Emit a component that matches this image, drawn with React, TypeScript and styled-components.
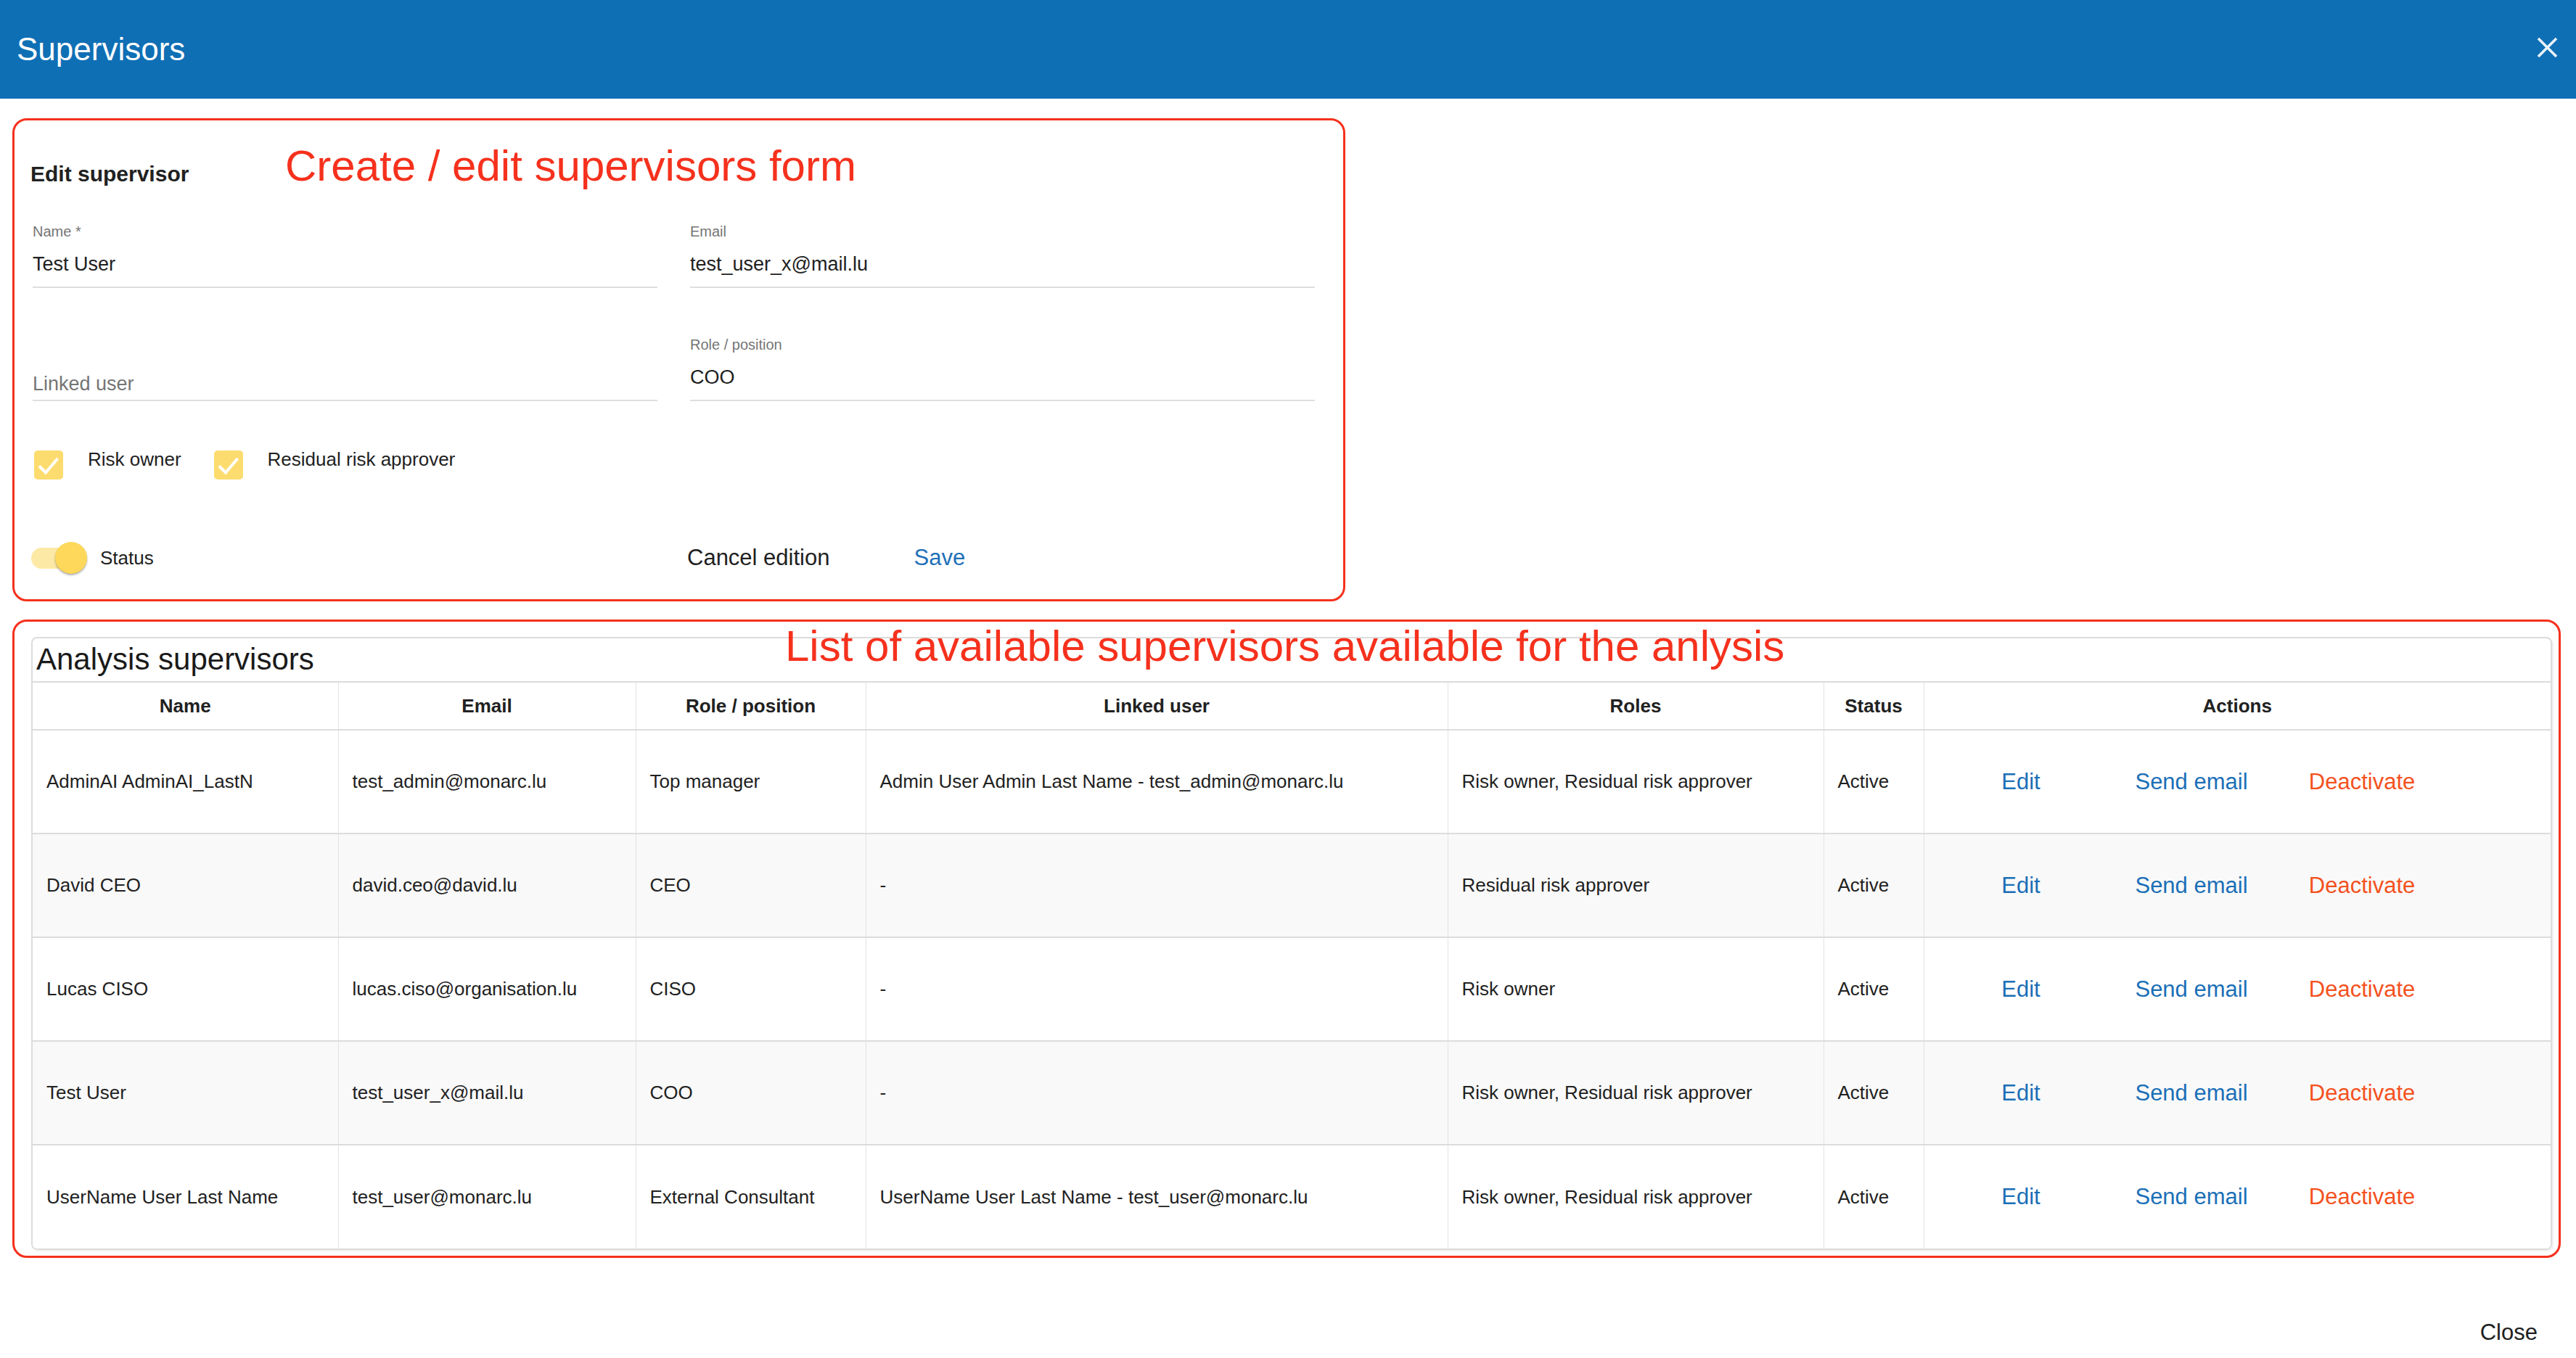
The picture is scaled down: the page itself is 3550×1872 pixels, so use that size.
import React from 'react';
import styled, { createGlobalStyle } from 'styled-components';

const GlobalStyle = createGlobalStyle`
  html, body {
    margin: 0;
    padding: 0;
    background: #ffffff;
  }

  body {
    font-family: 'Liberation Sans', Arial, Helvetica, sans-serif;
    color: #212121;
  }

  * {
    box-sizing: border-box;
  }
`;

const Page = styled.div`
  width: 3550px;
  min-height: 1872px;
  display: flex;
  flex-direction: column;
`;

const TopBar = styled.header`
  height: 136px;
  padding: 0 25px 0 23px;
  display: flex;
  align-items: center;
  justify-content: space-between;
  background: #0f6fb5;

  h1 {
    margin: 0;
    font-size: 44px;
    line-height: 52px;
    font-weight: 400;
    color: #ffffff;
  }
`;

const CloseIcon = styled.button`
  width: 29px;
  height: 29px;
  margin-bottom: 6px;
  padding: 0;
  border: none;
  background: none;
  display: flex;

  svg {
    width: 29px;
    height: 29px;
  }
`;

const Content = styled.main`
  padding: 27px 21px 0 17px;
  display: flex;
  flex-direction: column;
  gap: 25px;
`;

// red frames drawn over the screenshot
const Frame = styled.section<{ $width: number }>`
  position: relative;
  width: ${(props) => props.$width}px;
  border: 3px solid #f5311d;
  border-radius: 20px;
`;

const Annotation = styled.div<{ $left: number; $top: number }>`
  position: absolute;
  left: ${(props) => props.$left}px;
  top: ${(props) => props.$top}px;
  font-size: 60px;
  line-height: 60px;
  color: #f5311d;
  white-space: nowrap;
`;

const FormBody = styled.div`
  padding: 56px 24px 35px 24px;
  display: flex;
  flex-direction: column;
`;

const FormTitle = styled.h2`
  margin: 0 0 49px -2px;
  font-size: 30px;
  line-height: 36px;
  font-weight: 700;
  color: #212121;
`;

const FieldGrid = styled.div`
  display: grid;
  grid-template-columns: 861px 861px;
  column-gap: 45px;
  row-gap: 66px;
  margin-left: 1px;
`;

const Field = styled.div`
  height: 90px;
  display: flex;
  flex-direction: column;
  justify-content: flex-end;
  padding-bottom: 15px;
  border-bottom: 2px solid #dedede;
`;

const FieldLabel = styled.label`
  font-size: 20px;
  line-height: 24px;
  color: #757575;
  margin-bottom: 17px;
`;

const FieldValue = styled.div<{ $placeholder?: boolean }>`
  font-size: 27px;
  line-height: 32px;
  color: ${(props) => (props.$placeholder ? '#757575' : '#212121')};
  margin-bottom: ${(props) => (props.$placeholder ? '-9px' : '0')};
`;

const CheckRow = styled.div`
  margin-top: 68px;
  display: flex;
  align-items: flex-start;
`;

const CheckItem = styled.div`
  display: flex;
  align-items: flex-start;
  gap: 34px;
  margin-right: 42px;
  margin-left: 3px;

  span {
    margin-top: -3px;
    font-size: 26px;
    line-height: 30px;
    color: #212121;
  }
`;

const CheckBox = styled.div`
  width: 40px;
  height: 40px;
  border-radius: 5px;
  background: #fddc6f;
  display: flex;
  align-items: center;
  justify-content: center;
`;

const ActionRow = styled.div`
  margin-top: 86px;
  height: 44px;
  display: grid;
  grid-template-columns: 906px auto;
  align-items: center;
`;

const StatusToggle = styled.div`
  display: flex;
  align-items: center;
  gap: 18px;

  span {
    font-size: 26px;
    line-height: 30px;
  }
`;

const Switch = styled.div`
  position: relative;
  width: 77px;
  height: 44px;
  margin-left: -1px;
  display: flex;
  align-items: center;
`;

const SwitchTrack = styled.div`
  width: 74px;
  height: 29px;
  border-radius: 15px;
  background: #fde9a6;
`;

const SwitchThumb = styled.div`
  position: absolute;
  right: 0;
  top: 0;
  width: 44px;
  height: 44px;
  border-radius: 50%;
  background: #fdd85a;
  box-shadow: 0 2px 3px rgba(0, 0, 0, 0.25), 0 1px 1px rgba(0, 0, 0, 0.14);
`;

const FormButtons = styled.div`
  display: flex;
  align-items: center;
  gap: 116px;
  margin-left: -3px;
`;

const TextButton = styled.button<{ $color?: string; $size?: number }>`
  padding: 0;
  border: none;
  background: none;
  font-family: inherit;
  font-size: ${(props) => props.$size ?? 31}px;
  line-height: 40px;
  color: ${(props) => props.$color ?? '#212121'};
  cursor: pointer;
  white-space: nowrap;
`;

const ListBody = styled.div`
  padding: 21px 9px 8px 23px;
`;

const Card = styled.div`
  border: 2px solid #dcdcdc;
  border-radius: 8px;
  box-shadow: 2px 2px 1px rgba(0, 0, 0, 0.06);
  overflow: hidden;
`;

const CardTitle = styled.h3`
  margin: 0;
  padding: 5px 5px 6px 5px;
  font-size: 42px;
  line-height: 48px;
  font-weight: 400;
  color: #1a1a1a;
`;

const Table = styled.table`
  width: 100%;
  table-layout: fixed;
  border-collapse: collapse;
  font-size: 26px;
  color: #212121;
`;

const HeadCell = styled.th`
  height: 66px;
  padding: 0;
  font-weight: 700;
  text-align: center;
  border-top: 2px solid #dcdcdc;
  border-bottom: 2px solid #dcdcdc;
  border-left: 1px solid #e3e3e3;

  &:first-child {
    border-left: none;
  }
`;

const Row = styled.tr<{ $alt: boolean }>`
  background: ${(props) => (props.$alt ? '#f9f9f9' : '#ffffff')};
  border-bottom: 2px solid #dcdcdc;

  &:last-child {
    border-bottom: none;
  }
`;

const Cell = styled.td`
  height: 143px;
  padding: 0 10px 0 19px;
  border-left: 1px solid #e3e3e3;
  white-space: nowrap;

  &:first-child {
    border-left: none;
  }
`;

const ActionCell = styled(Cell)`
  padding-left: 34px;
`;

const ActionList = styled.div`
  display: flex;
  gap: 36px;
`;

const ActionButton = styled.button<{ $danger?: boolean }>`
  min-width: 199px;
  padding: 0 14px;
  border: none;
  background: none;
  font-family: inherit;
  font-size: 31px;
  line-height: 40px;
  text-align: center;
  color: ${(props) => (props.$danger ? '#f4511e' : '#1b6fb7')};
  cursor: pointer;
`;

const Footer = styled.footer`
  margin-top: 83px;
  padding-right: 53px;
  display: flex;
  justify-content: flex-end;
`;

interface ISupervisor {
  name: string;
  email: string;
  role: string;
  linked: string;
  roles: string;
  status: string;
}

const supervisors: ISupervisor[] = [
  {
    name: 'AdminAI AdminAI_LastN',
    email: 'test_admin@monarc.lu',
    role: 'Top manager',
    linked: 'Admin User Admin Last Name - test_admin@monarc.lu',
    roles: 'Risk owner, Residual risk approver',
    status: 'Active',
  },
  {
    name: 'David CEO',
    email: 'david.ceo@david.lu',
    role: 'CEO',
    linked: '-',
    roles: 'Residual risk approver',
    status: 'Active',
  },
  {
    name: 'Lucas CISO',
    email: 'lucas.ciso@organisation.lu',
    role: 'CISO',
    linked: '-',
    roles: 'Risk owner',
    status: 'Active',
  },
  {
    name: 'Test User',
    email: 'test_user_x@mail.lu',
    role: 'COO',
    linked: '-',
    roles: 'Risk owner, Residual risk approver',
    status: 'Active',
  },
  {
    name: 'UserName User Last Name',
    email: 'test_user@monarc.lu',
    role: 'External Consultant',
    linked: 'UserName User Last Name - test_user@monarc.lu',
    roles: 'Risk owner, Residual risk approver',
    status: 'Active',
  },
];

const columns = [
  { title: 'Name', width: 421 },
  { title: 'Email', width: 410 },
  { title: 'Role / position', width: 317 },
  { title: 'Linked user', width: 802 },
  { title: 'Roles', width: 518 },
  { title: 'Status', width: 138 },
  { title: 'Actions', width: 864 },
];

const Check = () => (
  <svg width="40" height="40" viewBox="0 0 40 40">
    <path
      d="M7 21.5 L16 30.5 L32.5 11"
      fill="none"
      stroke="#ffffff"
      strokeWidth="4"
    />
  </svg>
);

const App = () => {
  return (
    <Page>
      <GlobalStyle />
      <TopBar>
        <h1>Supervisors</h1>
        <CloseIcon>
          <svg viewBox="0 0 29 29">
            <path
              d="M2 2 L27 27 M27 2 L2 27"
              stroke="#eaf2fa"
              strokeWidth="3.6"
              fill="none"
            />
          </svg>
        </CloseIcon>
      </TopBar>

      <Content>
        <Frame $width={1837}>
          <Annotation $left={373} $top={33}>
            Create / edit supervisors form
          </Annotation>
          <FormBody>
            <FormTitle>Edit supervisor</FormTitle>
            <FieldGrid>
              <Field>
                <FieldLabel>Name *</FieldLabel>
                <FieldValue>Test User</FieldValue>
              </Field>
              <Field>
                <FieldLabel>Email</FieldLabel>
                <FieldValue>test_user_x@mail.lu</FieldValue>
              </Field>
              <Field>
                <FieldValue $placeholder>Linked user</FieldValue>
              </Field>
              <Field>
                <FieldLabel>Role / position</FieldLabel>
                <FieldValue>COO</FieldValue>
              </Field>
            </FieldGrid>

            <CheckRow>
              <CheckItem>
                <CheckBox>
                  <Check />
                </CheckBox>
                <span>Risk owner</span>
              </CheckItem>
              <CheckItem>
                <CheckBox>
                  <Check />
                </CheckBox>
                <span>Residual risk approver</span>
              </CheckItem>
            </CheckRow>

            <ActionRow>
              <StatusToggle>
                <Switch>
                  <SwitchTrack />
                  <SwitchThumb />
                </Switch>
                <span>Status</span>
              </StatusToggle>
              <FormButtons>
                <TextButton>Cancel edition</TextButton>
                <TextButton $color="#1f70b8">Save</TextButton>
              </FormButtons>
            </ActionRow>
          </FormBody>
        </Frame>

        <Frame $width={3512}>
          <Annotation $left={1062} $top={4}>
            List of available supervisors available for the anlysis
          </Annotation>
          <ListBody>
            <Card>
              <CardTitle>Analysis supervisors</CardTitle>
              <Table>
                <colgroup>
                  {columns.map((col) => (
                    <col key={col.title} style={{ width: col.width }} />
                  ))}
                </colgroup>
                <thead>
                  <tr>
                    {columns.map((col) => (
                      <HeadCell key={col.title}>{col.title}</HeadCell>
                    ))}
                  </tr>
                </thead>
                <tbody>
                  {supervisors.map((s, i) => (
                    <Row key={s.email} $alt={i % 2 === 1}>
                      <Cell>{s.name}</Cell>
                      <Cell>{s.email}</Cell>
                      <Cell>{s.role}</Cell>
                      <Cell>{s.linked}</Cell>
                      <Cell>{s.roles}</Cell>
                      <Cell>{s.status}</Cell>
                      <ActionCell>
                        <ActionList>
                          <ActionButton>Edit</ActionButton>
                          <ActionButton>Send email</ActionButton>
                          <ActionButton $danger>Deactivate</ActionButton>
                        </ActionList>
                      </ActionCell>
                    </Row>
                  ))}
                </tbody>
              </Table>
            </Card>
          </ListBody>
        </Frame>
      </Content>

      <Footer>
        <TextButton>Close</TextButton>
      </Footer>
    </Page>
  );
};

export default App;
